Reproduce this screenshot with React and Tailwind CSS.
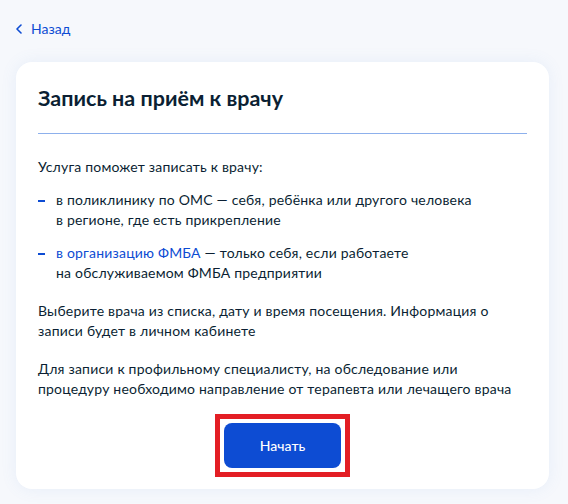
import React from 'react';

const items = [
  {
    link: null,
    text: 'в поликлинику по ОМС — себя, ребёнка или другого человека',
    tail: 'в регионе, где есть прикрепление',
  },
  {
    link: 'в организацию ФМБА',
    text: ' — только себя, если работаете',
    tail: 'на обслуживаемом ФМБА предприятии',
  },
];

export default function App() {
  return (
    <div
      className="min-h-screen w-full bg-[#f6f8fc] px-4 pt-[19px] text-[#0b1f33]"
      style={{ fontFamily: "Lato, 'Noto Sans', sans-serif" }}
    >
      {/* Back */}
      <a href="#" className="flex items-center gap-[9px] text-[14px] leading-5 text-[#0d4cd3]">
        <svg width="6" height="10" viewBox="0 0 6 10" fill="none">
          <path d="M5 1L1 5l4 4" stroke="#0d4cd3" strokeWidth="1.6" strokeLinecap="round" strokeLinejoin="round" />
        </svg>
        Назад
      </a>

      {/* Card */}
      <div className="mt-[23px] w-[533px] rounded-2xl bg-white px-[22px] pt-[24px] pb-[12px] shadow-[0_0_16px_rgba(102,150,215,0.10)]">
        <h1 className="text-[21.5px] font-bold leading-6">Запись на приём к врачу</h1>
        <div className="mt-[23px] border-t border-[#8db0ec]" />

        <div className="mt-[23px] text-[14px] leading-5 tracking-[0.2px] whitespace-nowrap">
          <p>Услуга поможет записать к врачу:</p>
          <ul className="mt-[13px] flex flex-col gap-[13px]">
            {items.map((it, i) => (
              <li key={i} className="flex">
                <span className="mt-[10px] mr-[11px] h-[2px] w-[7px] shrink-0 bg-[#0d4cd3]" />
                <div>
                  <div>
                    {it.link && <a href="#" className="text-[#0d4cd3]">{it.link}</a>}
                    {it.text}
                  </div>
                  <div>{it.tail}</div>
                </div>
              </li>
            ))}
          </ul>
          <p className="mt-[18px]">
            Выберите врача из списка, дату и время посещения. Информация о
            <br />
            записи будет в личном кабинете
          </p>
          <p className="mt-[18px]">
            Для записи к профильному специалисту, на обследование или
            <br />
            процедуру необходимо направление от терапевта или лечащего врача
          </p>
        </div>

        <div className="mt-[15px] flex justify-center">
          <div className="border-[5px] border-[#e31e24] p-[4px]">
            <button className="block h-[45px] w-[117px] rounded-lg bg-[#0d4cd3] text-[14px] font-medium text-white">
              Начать
            </button>
          </div>
        </div>
      </div>
    </div>
  );
}
